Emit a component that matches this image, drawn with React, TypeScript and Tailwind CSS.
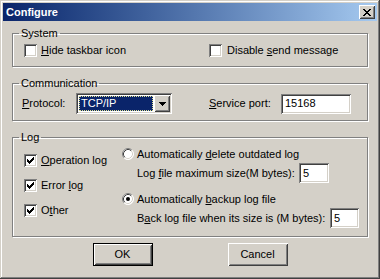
import React from "react";

// classic win2k bevels
const sunken =
  "shadow-[inset_1px_1px_#808080,inset_-1px_-1px_#ffffff,inset_2px_2px_#404040,inset_-2px_-2px_#d4d0c8]";
const raised =
  "shadow-[inset_1px_1px_#ffffff,inset_-1px_-1px_#404040,inset_2px_2px_#d4d0c8,inset_-2px_-2px_#808080]";
const etched = "border border-[#808080] shadow-[inset_1px_1px_#ffffff,1px_1px_#ffffff]";

const Check: React.FC<{ checked?: boolean }> = ({ checked }) => (
  <span className={`w-[13px] h-[13px] shrink-0 bg-white flex items-center justify-center ${sunken}`}>
    {checked && (
      <svg width="7" height="7" viewBox="0 0 7 7" shapeRendering="crispEdges">
        <path
          fill="#000"
          d="M0 2h1v3H0z M1 3h1v3H1z M2 4h1v3H2z M3 3h1v3H3z M4 2h1v3H4z M5 1h1v3H5z M6 0h1v3H6z"
        />
      </svg>
    )}
  </span>
);

const Radio: React.FC<{ checked?: boolean }> = ({ checked }) => (
  <svg width="12" height="12" viewBox="0 0 12 12" className="shrink-0">
    <circle cx="6" cy="6" r="5.5" fill="#fff" />
    <path d="M2.11 9.89 A5.5 5.5 0 0 1 9.89 2.11" fill="none" stroke="#808080" />
    <path d="M9.89 2.11 A5.5 5.5 0 0 1 2.11 9.89" fill="none" stroke="#ffffff" />
    <path d="M2.82 9.18 A4.5 4.5 0 0 1 9.18 2.82" fill="none" stroke="#404040" />
    <path d="M9.18 2.82 A4.5 4.5 0 0 1 2.82 9.18" fill="none" stroke="#d4d0c8" />
    {checked && <circle cx="6" cy="6" r="2" fill="#000" />}
  </svg>
);

const Field: React.FC<{ value: string; className: string }> = ({ value, className }) => (
  <div className={`h-[20px] bg-white flex items-center pl-[4px] ${sunken} ${className}`}>{value}</div>
);

const Key: React.FC<{ children: React.ReactNode }> = ({ children }) => (
  <span className="underline underline-offset-[1px]">{children}</span>
);

const App: React.FC = () => {
  return (
    <div className="w-[380px] h-[279px] bg-[#d4d0c8] p-[3px] flex flex-col text-[11px] leading-[13px] text-black font-['Liberation_Sans',Arial,sans-serif] shadow-[inset_-1px_-1px_#404040,inset_1px_1px_#d4d0c8,inset_-2px_-2px_#808080,inset_2px_2px_#ffffff]">
      {/* Title bar */}
      <div className="h-[18px] shrink-0 bg-gradient-to-r from-[#0a246a] to-[#a6caf0] flex items-center justify-between pl-[3px] pr-[2px]">
        <span className="text-white font-bold">Configure</span>
        <button className={`w-[16px] h-[14px] bg-[#d4d0c8] flex items-center justify-center ${raised}`}>
          <svg width="8" height="7" viewBox="0 0 8 7" shapeRendering="crispEdges">
            <path
              fill="#000"
              d="M0 0h2v1H0z M6 0h2v1H6z M1 1h2v1H1z M5 1h2v1H5z M2 2h4v1H2z M3 3h2v1H3z M2 4h4v1H2z M1 5h2v1H1z M5 5h2v1H5z M0 6h2v1H0z M6 6h2v1H6z"
            />
          </svg>
        </button>
      </div>

      <div className="flex flex-col px-[9px]">
        {/* System */}
        <fieldset className={`mt-[6px] h-[40px] ${etched}`}>
          <legend className="ml-[6px] px-[2px]">System</legend>
          <div className="flex items-center pl-[11px] pt-[4px]">
            <div className="w-[185px] flex items-center gap-[4px]">
              <Check />
              <span>
                <Key>H</Key>ide taskbar icon
              </span>
            </div>
            <div className="flex items-center gap-[5px]">
              <Check />
              <span>
                Disable <Key>s</Key>end message
              </span>
            </div>
          </div>
        </fieldset>

        {/* Communication */}
        <fieldset className={`mt-[10px] h-[44px] ${etched}`}>
          <legend className="ml-[6px] px-[2px]">Communication</legend>
          <div className="flex items-center pl-[9px] pt-[3px]">
            <span className="w-[54px]">
              <Key>P</Key>rotocol:
            </span>
            <div className={`w-[96px] h-[21px] bg-white flex items-center p-[2px] ${sunken}`}>
              <div className="flex-1 h-full p-[1px]">
                <div className="h-full bg-[#0a246a] text-white flex items-center pl-[2px] outline-1 outline-dotted outline-[#e0e090] -outline-offset-1">
                  TCP/IP
                </div>
              </div>
              <div className={`w-[16px] h-full bg-[#d4d0c8] flex items-center justify-center ${raised}`}>
                <svg width="7" height="4" viewBox="0 0 7 4" shapeRendering="crispEdges">
                  <path fill="#000" d="M0 0h7v1H0z M1 1h5v1H1z M2 2h3v1H2z M3 3h1v1H3z" />
                </svg>
              </div>
            </div>
            <span className="ml-[37px] w-[72px]">
              <Key>S</Key>ervice port:
            </span>
            <Field value="15168" className="w-[70px]" />
          </div>
        </fieldset>

        {/* Log */}
        <fieldset className={`mt-[10px] h-[106px] ${etched}`}>
          <legend className="ml-[6px] px-[2px]">Log</legend>
          <div className="flex pl-[11px]">
            <div className="w-[98px] flex flex-col pt-[4px]">
              <div className="h-[25px] flex items-center gap-[4px]">
                <Check checked />
                <span>
                  <Key>O</Key>peration log
                </span>
              </div>
              <div className="h-[25px] flex items-center gap-[4px]">
                <Check checked />
                <span>
                  Error <Key>l</Key>og
                </span>
              </div>
              <div className="h-[25px] flex items-center gap-[4px]">
                <Check checked />
                <span>
                  O<Key>t</Key>her
                </span>
              </div>
            </div>

            <div className="flex flex-col pt-[1px] whitespace-nowrap">
              <div className="h-[18px] flex items-center gap-[3px]">
                <Radio />
                <span>
                  Automatically <Key>d</Key>elete outdated log
                </span>
              </div>
              <div className="h-[20px] flex items-center pl-[15px]">
                <span className="w-[162px]">
                  Log <Key>f</Key>ile maximum size(M bytes):
                </span>
                <Field value="5" className="w-[30px]" />
              </div>
              <div className="mt-[7px] h-[18px] flex items-center gap-[3px]">
                <Radio checked />
                <span>
                  Automatically <Key>b</Key>ackup log file
                </span>
              </div>
              <div className="h-[20px] flex items-center pl-[15px]">
                <span className="w-[193px]">
                  B<Key>a</Key>ck log file when its size is (M bytes):
                </span>
                <Field value="5" className="w-[29px]" />
              </div>
            </div>
          </div>
        </fieldset>

        {/* Buttons */}
        <div className="mt-[6px] flex justify-center gap-[75px]">
          <button className="w-[60px] h-[23px] border border-black bg-[#d4d0c8] flex items-center justify-center">
            <span className={`w-full h-full flex items-center justify-center ${raised}`}>OK</span>
          </button>
          <button className={`w-[60px] h-[23px] bg-[#d4d0c8] flex items-center justify-center ${raised}`}>
            Cancel
          </button>
        </div>
      </div>
    </div>
  );
};

export default App;
